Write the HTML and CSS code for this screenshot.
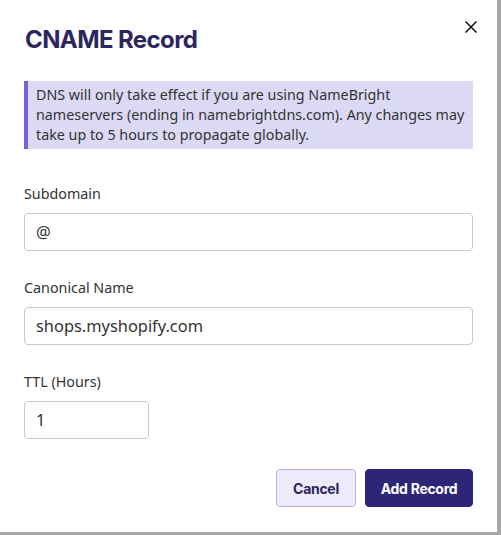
FILE: index.html
```html
<!DOCTYPE html>
<html lang="en">
<head>
<meta charset="utf-8">
<title>CNAME Record</title>
<link rel="stylesheet" href="styles.css">
</head>
<body>
<div class="page">
  <div class="modal">
    <button class="close" aria-label="Close">
      <svg width="12" height="12" viewBox="0 0 12 12"><path d="M0.5 0.5 L11.5 11.5 M11.5 0.5 L0.5 11.5" stroke="#111" stroke-width="1.5" fill="none"/></svg>
    </button>
    <h1 class="title">CNAME Record</h1>
    <div class="alert">DNS will only take effect if you are using NameBright nameservers (ending in namebrightdns.com). Any changes may take up to 5 hours to propagate globally.</div>
    <div class="field">
      <label class="label">Subdomain</label>
      <div class="input">@</div>
    </div>
    <div class="field">
      <label class="label">Canonical Name</label>
      <div class="input">shops.myshopify.com</div>
    </div>
    <div class="field">
      <label class="label">TTL (Hours)</label>
      <div class="input small">1</div>
    </div>
    <div class="actions">
      <button class="btn cancel">Cancel</button>
      <button class="btn primary">Add Record</button>
    </div>
  </div>
</div>
</body>
</html>
```
FILE: styles.css
```css
html, body {
  margin: 0;
  padding: 0;
}
body {
  background: #a8a8a8;
  width: 501px;
  height: 535px;
  overflow: hidden;
}
.page {
  width: 501px;
  height: 535px;
}
.modal {
  position: relative;
  box-sizing: border-box;
  width: 497px;
  height: 532px;
  background: #fff;
  padding: 24px 24px 25px;
  font-family: "Noto Sans", sans-serif;
  color: #333;
}
.close {
  position: absolute;
  top: 21px;
  right: 20px;
  width: 12px;
  height: 12px;
  padding: 0;
  border: 0;
  background: none;
  display: flex;
}
.title {
  margin: 0 0 25px;
  font-family: Inter, sans-serif;
  font-weight: 700;
  font-size: 24px;
  letter-spacing: -0.6px;
  line-height: 32px;
  color: #2c2660;
  padding-left: 1px;
}
.alert {
  background: #dcd9f5;
  border-left: 4px solid #7663d6;
  padding: 4px 3px 4px 8px;
  font-size: 14.3px;
  line-height: 20px;
  color: #333;
  margin-bottom: 35px;
}
.field {
  display: flex;
  flex-direction: column;
  margin-bottom: 27px;
}
.label {
  font-size: 14.3px;
  line-height: 20px;
  color: #333;
  margin-bottom: 9px;
}
.input {
  box-sizing: border-box;
  height: 38px;
  border: 1px solid #c8c8c8;
  border-radius: 4px;
  padding: 0 11px;
  font-size: 16.4px;
  line-height: 36px;
  color: #333;
}
.input.small {
  width: 125px;
}
.actions {
  display: flex;
  justify-content: flex-end;
  gap: 9px;
  margin-top: 30px;
}
.field:last-of-type {
  margin-bottom: 0;
}
.btn {
  box-sizing: border-box;
  height: 38px;
  border-radius: 4px;
  font-family: Inter, sans-serif;
  font-weight: 700;
  font-size: 14px;
  letter-spacing: -0.3px;
  padding: 0;
  white-space: nowrap;
}
.cancel {
  width: 80px;
  background: #eceafb;
  border: 1px solid #b5aef0;
  color: #2c2660;
}
.primary {
  width: 108px;
  background: #2d2577;
  border: 1px solid #2d2577;
  color: #fff;
}
```
